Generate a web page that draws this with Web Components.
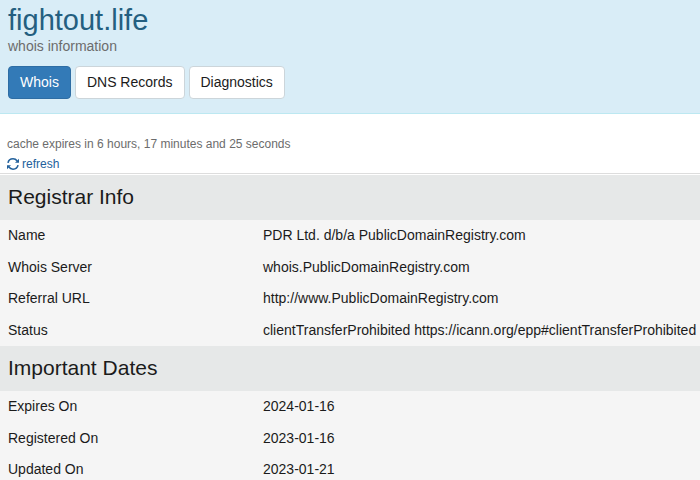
<!DOCTYPE html>
<html lang="en">
<head>
<meta charset="utf-8">
<title>fightout.life whois information</title>
<style>
  body { margin: 0; background: #fff; color: #1b1b1b; font: 14px/20px "Liberation Sans", Arial, sans-serif; }
</style>
</head>
<body>
<whois-header>
  <span slot="domain">fightout.life</span>
  <span slot="subtitle">whois information</span>
  <tab-button active>Whois</tab-button>
  <tab-button>DNS Records</tab-button>
  <tab-button>Diagnostics</tab-button>
</whois-header>
<main>
  <cache-notice>cache expires in 6 hours, 17 minutes and 25 seconds</cache-notice>
  <whois-section heading="Registrar Info">
    <whois-entry label="Name">PDR Ltd. d/b/a PublicDomainRegistry.com</whois-entry>
    <whois-entry label="Whois Server">whois.PublicDomainRegistry.com</whois-entry>
    <whois-entry label="Referral URL">http://www.PublicDomainRegistry.com</whois-entry>
    <whois-entry label="Status">clientTransferProhibited https://icann.org/epp#clientTransferProhibited</whois-entry>
  </whois-section>
  <whois-section heading="Important Dates">
    <whois-entry label="Expires On">2024-01-16</whois-entry>
    <whois-entry label="Registered On">2023-01-16</whois-entry>
    <whois-entry label="Updated On">2023-01-21</whois-entry>
  </whois-section>
</main>

<template id="header-template">
  <style>
    :host { display: block; padding: 4px 8px 14px; background: #d9edf7; border-bottom: 1px solid #bce8f1; }
    h1 { margin: 0; font-size: 29px; line-height: 32px; font-weight: 400; color: #245f80; }
    p { margin: 0; line-height: 20px; color: #6c6c6c; }
    nav { display: flex; flex-wrap: wrap; gap: 4px; margin-top: 10px; }
  </style>
  <h1><slot name="domain"></slot></h1>
  <p><slot name="subtitle"></slot></p>
  <nav aria-label="Domain tools"><slot></slot></nav>
</template>

<template id="tab-template">
  <style>
    :host { display: block; }
    button { display: block; margin: 0; padding: 6px 11px 7px; border: 1px solid #ccd5da; border-radius: 4px; background: #fff; color: #1b1b1b; font: inherit; line-height: 18px; cursor: pointer; }
    :host([active]) button { background: #337ab7; border-color: #2e6da4; color: #fff; }
  </style>
  <button type="button"><slot></slot></button>
</template>

<template id="notice-template">
  <style>
    :host { display: block; padding: 20px 7px 0; border-bottom: 1px solid #ddd; margin-bottom: 1px; font-size: 12px; color: #6c6c6c; }
    p { margin: 0; line-height: 20px; }
    a { display: flex; align-items: center; gap: 3px; width: fit-content; height: 19px; color: #23619c; text-decoration: none; }
    svg { display: block; width: 12px; height: 12px; }
  </style>
  <p><slot></slot></p>
  <a href="#refresh">
    <svg viewBox="0 0 12 12" fill="none" stroke="currentColor" stroke-width="1.6" aria-hidden="true">
      <path d="M1 4.8C1.5 2.3 3.6.8 6 .8c1.7 0 3.2.8 4.2 2.1M11 7.2c-.5 2.5-2.6 4-5 4-1.7 0-3.2-.8-4.2-2.1"/>
      <path d="M12 .8v4H8zM0 11.2v-4h4z" fill="currentColor" stroke="none"/>
    </svg>
    <span>refresh</span>
  </a>
</template>

<template id="section-template">
  <style>
    :host { display: block; background: #f5f5f5; }
    h2 { margin: 0; padding: 8px 8px 9px; background: #e6e8e8; font-size: 21px; line-height: 28px; font-weight: 400; }
    table { width: 100%; border-collapse: collapse; table-layout: fixed; }
    th, td { padding: 5px 0 7px; font-weight: 400; text-align: left; vertical-align: top; line-height: 20px; }
    tr:nth-child(even) > * { padding-bottom: 6px; }
    th { width: 255px; padding-left: 8px; }
  </style>
  <h2></h2>
  <table><tbody></tbody></table>
</template>

<script>
  class TemplateElement extends HTMLElement {
    constructor() {
      super();
      const template = document.getElementById(this.constructor.templateId);
      this.attachShadow({ mode: "open" }).append(template.content.cloneNode(true));
    }
  }
  class WhoisHeader extends TemplateElement { static templateId = "header-template"; }
  class TabButton extends TemplateElement { static templateId = "tab-template"; }
  class CacheNotice extends TemplateElement { static templateId = "notice-template"; }

  class WhoisEntry extends HTMLElement {
    constructor() {
      super();
      this.attachShadow({ mode: "open" }).innerHTML =
        "<style>:host { display: block; overflow-wrap: break-word; }</style><slot></slot>";
    }
  }

  class WhoisSection extends TemplateElement {
    static templateId = "section-template";
    connectedCallback() {
      const heading = this.shadowRoot.querySelector("h2");
      const body = this.shadowRoot.querySelector("tbody");
      heading.textContent = this.getAttribute("heading");
      heading.id = "heading";
      this.shadowRoot.querySelector("table").setAttribute("aria-labelledby", "heading");
      body.replaceChildren();
      [...this.children].forEach((entry, index) => {
        const row = body.insertRow();
        const label = document.createElement("th");
        const slot = document.createElement("slot");
        label.scope = "row";
        label.textContent = entry.getAttribute("label");
        slot.name = entry.slot = "entry-" + index;
        row.append(label);
        row.insertCell().append(slot);
      });
    }
  }

  customElements.define("whois-header", WhoisHeader);
  customElements.define("tab-button", TabButton);
  customElements.define("cache-notice", CacheNotice);
  customElements.define("whois-entry", WhoisEntry);
  customElements.define("whois-section", WhoisSection);
</script>
</body>
</html>
